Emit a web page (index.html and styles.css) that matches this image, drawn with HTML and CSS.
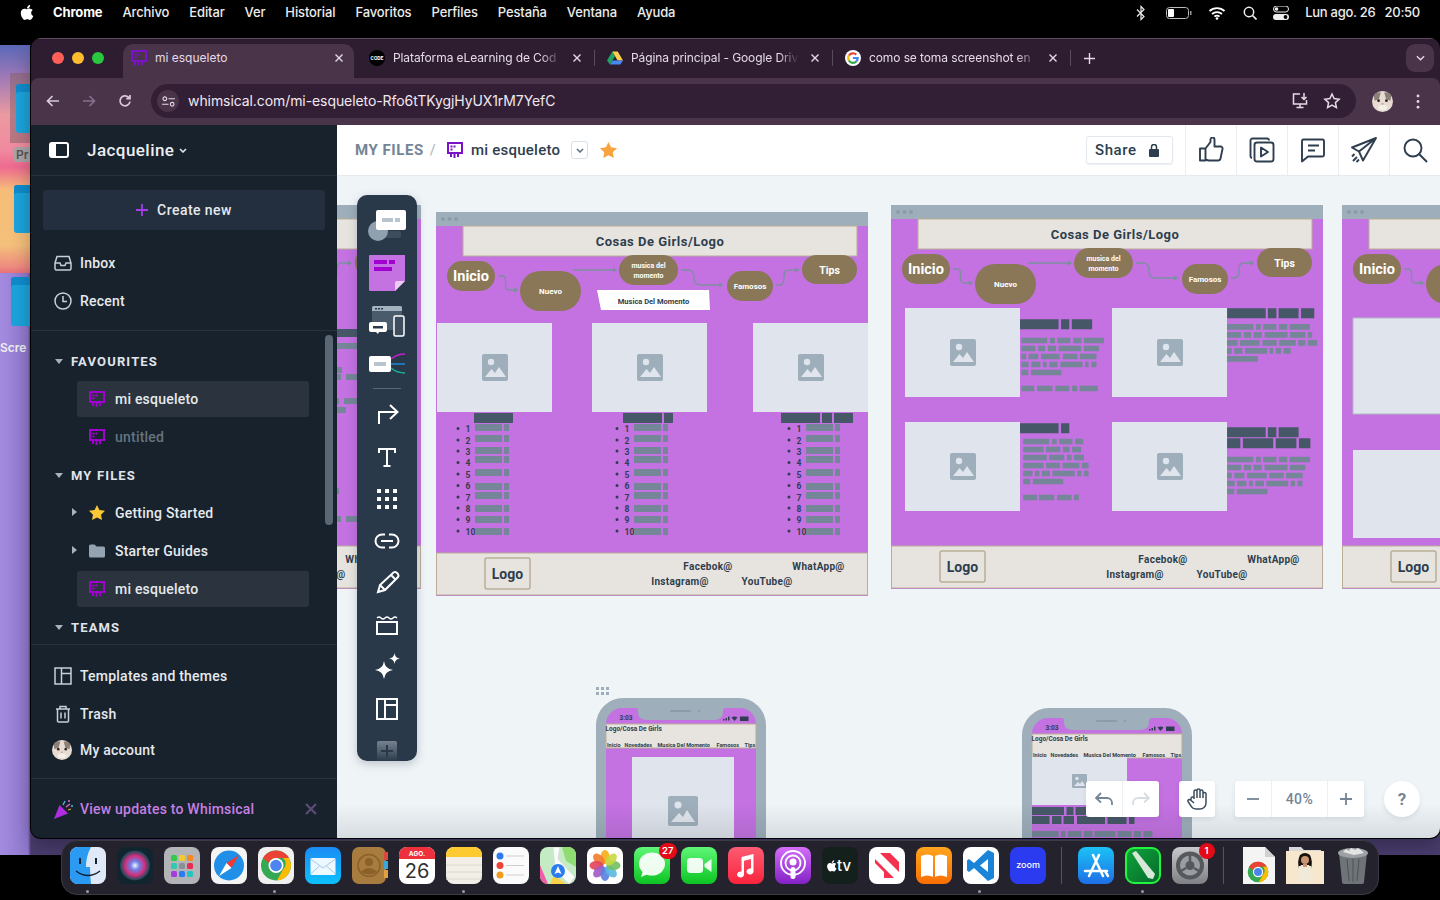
FILE: index.html
```html
<!DOCTYPE html>
<html lang="es">
<head>
<meta charset="utf-8">
<title>mi esqueleto</title>
<link rel="stylesheet" href="styles.css">
</head>
<body>
<svg class="defs" width="0" height="0" aria-hidden="true">
  <defs>
    <symbol id="wb" viewBox="0 0 16 16">
      <path fill="currentColor" d="M0 0h16v12H0zM2 2v8h12V2zM3.500 3.500h2v2h-2zM6.500 3.500h2v2h-2zM3.500 6.500h2v2h-2zM3 12h2v3H3zM6.500 12h2v4h-2zM10 12h2v3h-2z" fill-rule="evenodd"/>
    </symbol>
    <symbol id="chromelogo" viewBox="0 0 32 32">
      <circle cx="16" cy="16" r="15" fill="#34a853"/>
      <path fill="#ea4335" d="M3 8.500A15 15 0 0 1 29 8.500H16a7.500 7.500 0 0 0-7 5z"/>
      <path fill="#fbbc05" d="M29 8.500A15 15 0 0 1 17 31l6-11a7.500 7.500 0 0 0 0-11.500z"/>
      <circle cx="16" cy="16" r="7.500" fill="#fff"/>
      <circle cx="16" cy="16" r="5.800" fill="#4c85f0"/>
    </symbol>
    <symbol id="cat" viewBox="0 0 24 24">
      <circle cx="12" cy="12" r="12" fill="#e8dcd2"/>
      <path fill="#8b8078" d="M2 5c3-4 6-4 8-3L8 9 3 11zM22 5c-3-4-6-4-8-3l2 7 5 2z"/>
      <circle cx="7.500" cy="11" r="1.600" fill="#2e2622"/><circle cx="16.500" cy="11" r="1.600" fill="#2e2622"/>
      <path fill="#c98f8a" d="M10.500 14h3l-1.500 2z"/>
      <ellipse cx="12" cy="19" rx="5" ry="3" fill="#f5efe9"/>
    </symbol>
    <linearGradient id="gMail" x1="0" y1="0" x2="0" y2="1"><stop offset="0" stop-color="#1b8cf5"/><stop offset="1" stop-color="#0cc0fb"/></linearGradient>
    <linearGradient id="gMusic" x1="0" y1="0" x2="0" y2="1"><stop offset="0" stop-color="#fb5c74"/><stop offset="1" stop-color="#fa243c"/></linearGradient>
    <linearGradient id="gPod" x1="0" y1="0" x2="0" y2="1"><stop offset="0" stop-color="#d56efc"/><stop offset="1" stop-color="#8322c4"/></linearGradient>
    <linearGradient id="gBook" x1="0" y1="0" x2="0" y2="1"><stop offset="0" stop-color="#ffa51e"/><stop offset="1" stop-color="#f96e04"/></linearGradient>
    <linearGradient id="gGreen" x1="0" y1="0" x2="0" y2="1"><stop offset="0" stop-color="#5ff777"/><stop offset="1" stop-color="#0cc423"/></linearGradient>
    <linearGradient id="gStore" x1="0" y1="0" x2="0" y2="1"><stop offset="0" stop-color="#1cc2f7"/><stop offset="1" stop-color="#1e6fe6"/></linearGradient>
    <linearGradient id="gSet" x1="0" y1="0" x2="0" y2="1"><stop offset="0" stop-color="#c8c9cc"/><stop offset="1" stop-color="#7e8084"/></linearGradient>
    <linearGradient id="gPlus" x1="0" y1="0" x2="0" y2="1"><stop offset="0" stop-color="#77838f"/><stop offset="1" stop-color="#2b3a4a"/></linearGradient>
    <linearGradient id="gPencil" x1="0" y1="0" x2="1" y2="1"><stop offset="0" stop-color="#0fa53c"/><stop offset="1" stop-color="#05692a"/></linearGradient>
    <radialGradient id="gSiri"><stop offset="0" stop-color="#f4f4ff"/><stop offset=".3" stop-color="#6f7fe6"/><stop offset=".65" stop-color="#d1307e"/><stop offset="1" stop-color="#0f4a55"/></radialGradient>
  </defs>
</svg>

<header class="menubar">
  <div class="menu-left">
    <svg class="apple" viewBox="0 0 384 512"><path fill="#fff" d="M318.700 268.700c-.2-36.700 16.400-64.400 50-84.800-18.800-26.900-47.200-41.700-84.700-44.600-35.500-2.800-74.300 20.700-88.500 20.700-15 0-49.400-19.700-76.400-19.700C63.300 141.200 4 184.800 4 273.500q0 39.300 14.400 81.200c12.800 36.700 59 126.700 107.200 125.200 25.200-.6 43-17.900 75.800-17.900 31.800 0 48.300 17.900 76.400 17.900 48.600-.7 90.400-82.500 102.600-119.300-65.200-30.700-61.700-90-61.700-91.900zm-56.600-164.200c27.300-32.400 24.800-61.900 24-72.500-24.100 1.400-52 16.400-67.900 34.900-17.500 19.800-27.800 44.300-25.600 71.900 26.100 2 49.900-11.400 69.500-34.300z"/></svg>
    <strong class="menu-app">Chrome</strong>
    <span>Archivo</span><span>Editar</span><span>Ver</span><span>Historial</span><span>Favoritos</span><span>Perfiles</span><span>Pestaña</span><span>Ventana</span><span>Ayuda</span>
  </div>
  <div class="menu-right">
    <svg class="st st-bt" viewBox="0 0 10 16"><path fill="none" stroke="#eee" stroke-width="1.200" d="M1 4.500l7 7L5 14.500v-13l3 3-7 7"/></svg>
    <svg class="st st-bat" viewBox="0 0 26 12"><rect x=".5" y=".5" width="22" height="11" rx="3" fill="none" stroke="#bbb"/><rect x="2" y="2" width="6" height="8" rx="1" fill="#fff"/><path fill="#999" d="M24 4h1.500v4H24z"/></svg>
    <svg class="st st-wifi" viewBox="0 0 18 14"><path fill="none" stroke="#fff" stroke-width="1.800" d="M1.500 5a11 11 0 0 1 15 0M4 8a7.500 7.500 0 0 1 10 0M6.500 10.700a3.500 3.500 0 0 1 5 0"/><circle cx="9" cy="12.500" r="1.300" fill="#fff"/></svg>
    <svg class="st st-search" viewBox="0 0 14 14"><circle cx="6" cy="6" r="4.700" fill="none" stroke="#eee" stroke-width="1.500"/><path stroke="#eee" stroke-width="1.700" d="M9.500 9.500l4 4"/></svg>
    <svg class="st st-ctrl" viewBox="0 0 16 14"><rect x=".5" y="0" width="15" height="6" rx="3" fill="none" stroke="#eee"/><circle cx="3.500" cy="3" r="1.800" fill="#eee"/><rect y="8" width="16" height="6" rx="3" fill="#eee"/><circle cx="12.500" cy="11" r="1.900" fill="#000"/></svg>
    <span class="clock-date">Lun ago. 26</span><span class="clock-time">20:50</span>
  </div>
</header>

<div class="desktop">
  <div class="wall-top"></div>
  <div class="wall-folder wf1"><i></i></div>
  <div class="wall-label wl1">Pr</div>
  <div class="wall-folder wf2"><i></i></div>
  <div class="wall-folder wf3"><i></i></div>
  <div class="wall-label wl2">Scre</div>
</div>

<main class="window">
  <div class="tabstrip">
    <div class="lights"><i class="l-r"></i><i class="l-y"></i><i class="l-g"></i></div>
    <div class="tab active">
      <svg class="favicon wbfav"><use href="#wb"/></svg>
      <span class="tab-title">mi esqueleto</span>
      <svg class="tabx" viewBox="0 0 8 8"><path d="M.5.500l7 7M7.500.500l-7 7"/></svg>
    </div>
    <div class="tab">
      <svg class="favicon" viewBox="0 0 16 16"><circle cx="8" cy="8" r="8" fill="#000"/><text class="fav-code" x="8" y="10" text-anchor="middle">CODE</text></svg>
      <span class="tab-title fade">Plataforma eLearning de Cod</span>
      <svg class="tabx" viewBox="0 0 8 8"><path d="M.5.500l7 7M7.500.500l-7 7"/></svg>
    </div>
    <div class="tab">
      <svg class="favicon" viewBox="0 0 16 16"><path fill="#1fa463" d="M0 10.500L5.300 1.500l2.700 4.700L3 14.500z"/><path fill="#ffd04b" d="M5.300 1.500h5.400l5.300 9h-5.400z"/><path fill="#4688f4" d="M16 10.500l-2.700 4H3l2.600-4z"/></svg>
      <span class="tab-title fade">Página principal - Google Driv</span>
      <svg class="tabx" viewBox="0 0 8 8"><path d="M.5.500l7 7M7.500.500l-7 7"/></svg>
    </div>
    <div class="tab">
      <svg class="favicon" viewBox="0 0 16 16"><circle cx="8" cy="8" r="8" fill="#fff"/><path fill="none" stroke="#ea4335" stroke-width="2.200" d="M3.900 5.500A4.800 4.800 0 0 1 11.300 4.600"/><path fill="none" stroke="#fbbc05" stroke-width="2.200" d="M3.900 10.500a4.800 4.800 0 0 1 0-5"/><path fill="none" stroke="#34a853" stroke-width="2.200" d="M11.500 11.300a4.800 4.800 0 0 1-7.600-.8"/><path fill="none" stroke="#4285f4" stroke-width="2.200" d="M8 8h4.700a4.800 4.800 0 0 1-1.200 3.300"/></svg>
      <span class="tab-title fade">como se toma screenshot en</span>
      <svg class="tabx" viewBox="0 0 8 8"><path d="M.5.500l7 7M7.500.500l-7 7"/></svg>
    </div>
    <svg class="newtab" viewBox="0 0 12 12"><path d="M6 0v12M0 6h12"/></svg>
    <div class="tabmenu"><svg viewBox="0 0 10 6"><path d="M1 1l4 4 4-4"/></svg></div>
  </div>

  <div class="toolbar">
    <svg class="nav-ic" viewBox="0 0 14 14"><path d="M13 7H1.500M6.500 2l-5 5 5 5"/></svg>
    <svg class="nav-ic dim" viewBox="0 0 14 14"><path d="M1 7h11.500M7.500 2l5 5-5 5"/></svg>
    <svg class="nav-ic" viewBox="0 0 14 14"><path d="M12 7.500A5 5 0 1 1 10.500 3.200L12 4.500M12 1v3.700H8.300"/></svg>
    <div class="omnibox">
      <span class="site-ic"><svg viewBox="0 0 14 12"><circle cx="3" cy="3" r="2"/><path d="M7 3h7M0 9h7"/><circle cx="11" cy="9" r="2"/></svg></span>
      <span class="url">whimsical.com/mi-esqueleto-Rfo6tTKygjHyUX1rM7YefC</span>
      <svg class="omni-r" viewBox="0 0 18 18"><path d="M9 2H2.500v10h13V8M5.500 15.500h7M9 12v3.500M13 1v6M10.500 5L13 7.500 15.500 5"/></svg>
      <svg class="omni-r" viewBox="0 0 18 18"><path d="M9 2l2.100 4.600 5 .6-3.700 3.400 1 5L9 13.100l-4.400 2.500 1-5L1.900 7.200l5-.6z"/></svg>
    </div>
    <svg class="chrome-avatar"><use href="#cat"/></svg>
    <svg class="chrome-dots" viewBox="0 0 4 16"><circle cx="2" cy="2" r="1.500"/><circle cx="2" cy="8" r="1.500"/><circle cx="2" cy="14" r="1.500"/></svg>
  </div>

  <div class="app">
    <aside class="sidebar">
      <div class="side-head">
        <svg class="toggle" viewBox="0 0 20 16"><path fill="#fff" fill-rule="evenodd" d="M3 0h14a3 3 0 0 1 3 3v10a3 3 0 0 1-3 3H3a3 3 0 0 1-3-3V3a3 3 0 0 1 3-3zM7 2v12h10a1 1 0 0 0 1-1V3a1 1 0 0 0-1-1z"/></svg>
        <span class="workspace">Jacqueline</span>
        <svg class="ws-caret" viewBox="0 0 8 5"><path d="M1 1l3 3 3-3"/></svg>
      </div>
      <div class="create"><svg viewBox="0 0 12 12"><path d="M6 0v12M0 6h12"/></svg>Create new</div>
      <nav class="nav-top">
        <div class="nav-row"><svg viewBox="0 0 18 16"><path d="M1 8l2-6.500h12L17 8v5.500a1.500 1.500 0 0 1-1.500 1.500h-13A1.500 1.500 0 0 1 1 13.500zM1 8h5l1 2.500h4L12 8h5"/></svg>Inbox</div>
        <div class="nav-row"><svg viewBox="0 0 18 18"><circle cx="9" cy="9" r="8"/><path d="M9 4v5.500h4"/></svg>Recent</div>
      </nav>
      <div class="tree">
        <div class="scrollthumb"></div>
        <div class="section"><i class="caret-down"></i>FAVOURITES</div>
        <div class="item sel"><svg class="ic-wb"><use href="#wb"/></svg>mi esqueleto</div>
        <div class="item dimmed"><svg class="ic-wb"><use href="#wb"/></svg>untitled</div>
        <div class="section"><i class="caret-down"></i>MY FILES</div>
        <div class="item"><i class="caret-right"></i><svg class="ic-file" viewBox="0 0 16 16"><path fill="#fcc935" d="M8 0l2.400 5 5.600.8-4 3.900 1 5.400L8 12.500 3 15.100l1-5.400-4-3.900L5.600 5z"/></svg>Getting Started</div>
        <div class="item"><i class="caret-right"></i><svg class="ic-file" viewBox="0 0 16 16"><path fill="#94a3b2" d="M0 3a1.500 1.500 0 0 1 1.500-1.500h4L7.500 3.500h7A1.500 1.500 0 0 1 16 5v8a1.500 1.500 0 0 1-1.500 1.500h-13A1.500 1.500 0 0 1 0 13z"/></svg>Starter Guides</div>
        <div class="item sel"><svg class="ic-wb"><use href="#wb"/></svg>mi esqueleto</div>
        <div class="section"><i class="caret-down"></i>TEAMS</div>
      </div>
      <nav class="nav-bottom">
        <div class="nav-row"><svg viewBox="0 0 18 18"><path d="M1 1h16v16H1zM7.500 1v16M7.500 6.500H17"/></svg>Templates and themes</div>
        <div class="nav-row"><svg viewBox="0 0 18 18"><path d="M2 4h14M6 4V1.500h6V4M3.500 4v12a1.500 1.500 0 0 0 1.500 1h8a1.500 1.500 0 0 0 1.500-1V4M7 7.500v6M11 7.500v6"/></svg>Trash</div>
        <div class="nav-row account"><svg class="acc-av"><use href="#cat"/></svg>My account</div>
      </nav>
      <div class="promo">
        <svg class="confetti" viewBox="0 0 20 20"><path fill="#b12be0" d="M0 20L5.500 6l8.500 8.500z"/><path fill="none" stroke="#5db9e8" stroke-width="1.300" d="M9 6l2-4"/><path fill="none" stroke="#e06ad0" stroke-width="1.300" d="M12 8l4-3"/><path fill="none" stroke="#e0a040" stroke-width="1.300" d="M14 11l3-1"/><circle cx="15" cy="2" r="1" fill="#e06ad0"/><circle cx="18" cy="7" r="1" fill="#5db9e8"/></svg>
        <span class="promo-text">View updates to Whimsical</span>
        <svg class="promo-x" viewBox="0 0 12 12"><path d="M1 1l10 10M11 1L1 11"/></svg>
      </div>
    </aside>

    <section class="workspace-area">
      <div class="topbar">
        <div class="crumbs">
          <span class="crumb-root">MY FILES</span>
          <span class="crumb-sep">/</span>
          <svg class="crumb-wb"><use href="#wb"/></svg>
          <span class="crumb-name">mi esqueleto</span>
          <span class="crumb-drop"><svg viewBox="0 0 8 5"><path d="M1 1l3 3 3-3"/></svg></span>
          <svg class="crumb-star" viewBox="0 0 16 16"><path fill="#f7a440" d="M8 0l2.400 5 5.600.8-4 3.900 1 5.400L8 12.500 3 15.100l1-5.400-4-3.900L5.600 5z"/></svg>
        </div>
        <div class="top-actions">
          <div class="share">Share<svg viewBox="0 0 10 13"><path fill="#2e3e4e" d="M1 5h8a1 1 0 0 1 1 1v6a1 1 0 0 1-1 1H1a1 1 0 0 1-1-1V6a1 1 0 0 1 1-1z"/><path fill="none" stroke="#2e3e4e" stroke-width="1.500" d="M2.500 5V3a2.500 2.500 0 0 1 5 0v2"/></svg></div>
          <div class="act"><svg viewBox="0 0 26 26"><path d="M7.500 11.500H2v12h5.500zM7.500 11.500l5-6.500V2.500a2 2 0 0 1 4 0V9.500h6a2 2 0 0 1 2 2.500l-2 9.500a2.500 2.500 0 0 1-2.500 2H10.500l-3-1"/></svg></div>
          <div class="act"><svg viewBox="0 0 26 26"><path d="M20 3.500V3a2 2 0 0 0-2-1.500H3.500A2 2 0 0 0 1.500 3.500V19a2 2 0 0 0 1.500 2"/><rect x="5.500" y="5.500" width="19" height="19" rx="2.500"/><path d="M12 10.500v9l7-4.500z"/></svg></div>
          <div class="act"><svg viewBox="0 0 26 26"><path d="M3.500 2.500h19a1.500 1.500 0 0 1 1.500 1.500v14a1.500 1.500 0 0 1-1.500 1.500H8L2 24.500V4a1.500 1.500 0 0 1 1.500-1.500zM8 8.500h11M8 13.500h7"/></svg></div>
          <div class="act"><svg viewBox="0 0 26 26"><path d="M25 1L1 10.500l7 4 4 9zM25 1L8 14.500M25 1L12 23.500M2 24l4-4M5.500 25l2.500-2.500M1 19.500l2.500-2.500"/></svg></div>
          <div class="act"><svg viewBox="0 0 26 26"><circle cx="11" cy="11" r="8.500"/><path d="M17 17l8 8"/></svg></div>
        </div>
      </div>

      <div class="canvas">
        <svg class="board" viewBox="337 176 1103 662">
          <defs>
            <g id="shell">
              <rect class="purple" x="891" y="205" width="432" height="384"/>
              <rect class="chromebar" x="891" y="205" width="432" height="14"/>
              <circle class="bardot" cx="898" cy="212" r="2"/><circle class="bardot" cx="904.500" cy="212" r="2"/><circle class="bardot" cx="911" cy="212" r="2"/>
              <rect class="cream" x="918" y="219" width="394" height="30"/>
              <text class="t-title" x="1115" y="238.500">Cosas De Girls/Logo</text>
              <rect class="pill" x="902" y="254" width="48" height="30" rx="15"/>
              <text class="t-inicio" x="926" y="274">Inicio</text>
              <rect class="pill" x="975" y="264" width="61" height="40" rx="20"/>
              <text class="t-nav" x="1005.500" y="287">Nuevo</text>
              <rect class="pill" x="1074" y="248" width="59" height="30" rx="15"/>
              <text class="t-nav2" x="1103.500" y="261">musica del</text>
              <text class="t-nav2" x="1103.500" y="270.500">momento</text>
              <rect class="pill" x="1182" y="264" width="46" height="30" rx="15"/>
              <text class="t-nav" x="1205" y="282">Famosos</text>
              <rect class="pill" x="1257" y="248" width="55" height="29" rx="14.500"/>
              <text class="t-tips" x="1284.500" y="266.500">Tips</text>
              <path class="conn" d="M953.500 269h3q4 0 4 4v6q0 4 4 4h7M1028 263h42M1136 263h7q5 0 6 6v3q1 6 6 6h21M1231 278h3q5 0 5-6v-3q0-6 5-6h8"/>
              <path class="connhead" d="M969 280.500l4.500 2.500-4.500 2.500zM1068 260.500l4.500 2.500-4.500 2.500zM1174 275.500l4.500 2.500-4.500 2.500zM1250 260.500l4.500 2.500-4.500 2.500z"/>
              <rect class="cream" x="891.500" y="546" width="431" height="42"/>
              <rect class="logobox" x="940" y="551" width="45" height="31" rx="2"/>
              <text class="t-logo" x="962.500" y="571.500">Logo</text>
              <text class="t-foot" x="1163" y="562.500">Facebok@</text>
              <text class="t-foot" x="1273.500" y="562.500">WhatApp@</text>
              <text class="t-foot" x="1135" y="577.500">Instagram@</text>
              <text class="t-foot" x="1222" y="577.500">YouTube@</text>
            </g>
            <g id="imgbox">
              <rect class="ph" width="115" height="89"/>
              <g transform="translate(45 31)"><rect class="ph-ic" width="26" height="27" rx="2"/><circle class="ph" cx="9" cy="8" r="3.200"/><path class="ph" d="M3 23l6.500-8 3.500 4 4-6 7 10z"/></g>
            </g>
            <g id="rows">
              <path class="bullets" d="M458 427a1.500 1.500 0 1 1 0 3 1.500 1.500 0 1 1 0-3zM458 438.500a1.500 1.500 0 1 1 0 3 1.500 1.500 0 1 1 0-3zM458 449.500a1.500 1.500 0 1 1 0 3 1.500 1.500 0 1 1 0-3zM458 461a1.500 1.500 0 1 1 0 3 1.500 1.500 0 1 1 0-3zM458 472.500a1.500 1.500 0 1 1 0 3 1.500 1.500 0 1 1 0-3zM458 484a1.500 1.500 0 1 1 0 3 1.500 1.500 0 1 1 0-3zM458 495.500a1.500 1.500 0 1 1 0 3 1.500 1.500 0 1 1 0-3zM458 506.500a1.500 1.500 0 1 1 0 3 1.500 1.500 0 1 1 0-3zM458 518a1.500 1.500 0 1 1 0 3 1.500 1.500 0 1 1 0-3zM458 529.500a1.500 1.500 0 1 1 0 3 1.500 1.500 0 1 1 0-3z"/>
              <text class="t-num" x="465.500" y="432">1</text><text class="t-num" x="465.500" y="443.500">2</text><text class="t-num" x="465.500" y="454.500">3</text><text class="t-num" x="465.500" y="466">4</text><text class="t-num" x="465.500" y="477.500">5</text><text class="t-num" x="465.500" y="489">6</text><text class="t-num" x="465.500" y="500.500">7</text><text class="t-num" x="465.500" y="511.500">8</text><text class="t-num" x="465.500" y="523">9</text><text class="t-num" x="465.500" y="534.500">10</text>
              <path class="bar-g" d="M475 424h27v7h-27zM504 424h5v7h-5zM475 435h27v7h-27zM504 435h5v7h-5zM475 447h27v7h-27zM504 447h5v7h-5zM475 456h27v7h-27zM504 456h5v7h-5zM475 469h27v7h-27zM504 469h5v7h-5zM475 483h27v7h-27zM504 483h5v7h-5zM475 492h27v7h-27zM504 492h5v7h-5zM475 505h27v7h-27zM504 505h5v7h-5zM475 516h27v7h-27zM504 516h5v7h-5zM475 528h27v7h-27zM504 528h5v7h-5z"/>
            </g>
            <g id="phone">
              <rect class="chromebar" x="596" y="698" width="170" height="300" rx="27"/>
              <rect class="purple" x="606" y="708" width="150" height="300" rx="16"/>
              <path class="chromebar" d="M636 708h90q-3 0-3 3v1q0 8-9 8h-67q-9 0-9-8v-1q0-3-2-3z"/>
              <rect class="speaker" x="670" y="710" width="21" height="2" rx="1"/><circle class="speaker" cx="699" cy="711" r="1.200"/>
              <text class="t-status" x="626" y="720">3:03</text>
              <path class="darkfill" d="M723 719h1.500v1.500H723zM725.500 718h1.500v2.500h-1.500zM728 716.500h1.500v4H728zM740 716.500h8.500v4.500H740zM731.500 717.500a5 5 0 0 1 6 0l-3 3.500z"/>
              <rect class="cream" x="606" y="724" width="150" height="24"/>
              <text class="t-pt" x="605.500" y="730.500">Logo/Cosa De Girls</text>
              <text class="t-pn" x="607" y="746.500">Inicio</text><text class="t-pn" x="624.500" y="746.500">Novedades</text><text class="t-pn" x="657.500" y="746.500">Musica Del Momento</text><text class="t-pn" x="716.500" y="746.500">Famosos</text><text class="t-pn" x="744.500" y="746.500">Tips</text>
            </g>
          </defs>

          <!-- frame cut off on the left -->
          <use href="#shell" x="-902"/>
          <path class="bar-d" d="M337 329h20v8h-20z"/>
          <path class="bar-g" d="M337 343h20v6h-20zM337 367h5v6h-5zM337 374h4v6h-4zM346 374h11v6h-11zM337 398h2v6h-2zM344 398h13v6h-13zM337 407h9v6h-9zM337 488h2v6h-2zM337 516h4v6h-4zM346 516h11v6h-11z"/>

          <!-- frame 1 -->
          <use href="#shell" x="-455" y="7"/>
          <path class="tag" d="M597 290h112l1 20H601z"/>
          <text class="t-tag" x="653.500" y="303.500">Musica Del Momento</text>
          <use href="#imgbox" x="437" y="323"/><use href="#imgbox" x="592" y="323"/><use href="#imgbox" x="753" y="323"/>
          <path class="bar-d" d="M474 413h39v10h-39zM623 413h39v10h-39zM664 413h9v10h-9zM781 413h39v10h-39zM822 413h10v10h-10zM834 413h19v10h-19z"/>
          <use href="#rows"/>
          <use href="#rows" x="159"/>
          <use href="#rows" x="331"/>

          <!-- frame 2 -->
          <use href="#shell"/>
          <use href="#imgbox" x="905" y="308"/><use href="#imgbox" x="1112" y="308"/><use href="#imgbox" x="905" y="422"/><use href="#imgbox" x="1112" y="422"/>
          <g transform="translate(880 195) scale(.35714 .33333)">
            <path class="bar-d" d="M392 373h108v30H392zM507 373h23v30h-23zM537 373h57v30h-57zM972 340h108v30H972zM1086 340h24v30h-24zM1116 340h56v30h-56zM1179 340h37v30h-37zM392 685h108v30H392zM507 685h23v30h-23zM972 697h108v30H972zM1086 697h24v30h-24zM1116 697h56v30h-56zM972 730h37v30h-37zM1016 730h85v30h-85zM1108 730h58v30h-58zM1173 730h32v30h-32z"/>
            <path class="bar-g" d="M396 428h72v17h-72zM476 428h14v17h-14zM497 428h36v17h-36zM541 428h23v17h-23zM571 428h56v17h-56zM396 452h39v17h-39zM443 452h19v17h-19zM470 452h23v17h-23zM500 452h63v17h-63zM571 452h42v17h-42zM396 476h13v17h-13zM416 476h27v17h-27zM451 476h52v17h-52zM512 476h41v17h-41zM560 476h46v17h-46zM396 500h20v17h-20zM424 500h25v17h-25zM456 500h11v17h-11zM474 500h23v17h-23zM505 500h62v17h-62zM574 500h10v17h-10zM592 500h14v17h-14zM396 524h19v17h-19zM423 524h85v17h-85zM396 572h36v17h-36zM440 572h43v17h-43zM491 572h39v17h-39zM538 572h14v17h-14zM559 572h51v17h-51z"/>
            <path class="bar-g" d="M972 387h73v17h-73zM1053 387h13v17h-13zM1073 387h37v17h-37zM1117 387h23v17h-23zM1147 387h57v17h-57zM972 411h39v17h-39zM1019 411h20v17h-20zM1046 411h23v17h-23zM1077 411h64v17h-64zM1148 411h43v17h-43zM1198 411h12v17h-12zM972 435h29v17h-29zM1008 435h55v17h-55zM1071 435h40v17h-40zM1118 435h46v17h-46zM1171 435h20v17h-20zM1198 435h26v17h-26zM972 459h13v17h-13zM992 459h23v17h-23zM1022 459h62v17h-62zM1091 459h10v17h-10zM1108 459h15v17h-15zM1130 459h20v17h-20zM972 483h86v17h-86z"/>
            <path class="bar-g" d="M401 731h73v17h-73zM482 731h13v17h-13zM502 731h37v17h-37zM546 731h23v17h-23zM401 755h57v17h-57zM465 755h40v17h-40zM512 755h19v17h-19zM538 755h25v17h-25zM401 779h66v17h-66zM474 779h42v17h-42zM524 779h12v17h-12zM543 779h28v17h-28zM401 803h57v17h-57zM465 803h39v17h-39zM511 803h47v17h-47zM565 803h19v17h-19zM401 827h26v17h-26zM434 827h12v17h-12zM453 827h23v17h-23zM483 827h62v17h-62zM552 827h12v17h-12zM571 827h13v17h-13zM401 851h20v17h-20zM428 851h85v17h-85zM401 899h39v17h-39zM445 899h43v17h-43zM496 899h40v17h-40zM543 899h14v17h-14z"/>
            <path class="bar-g" d="M972 785h73v17h-73zM1053 785h13v17h-13zM1073 785h37v17h-37zM1117 785h23v17h-23zM1147 785h57v17h-57zM972 809h39v17h-39zM1019 809h20v17h-20zM1046 809h23v17h-23zM1077 809h64v17h-64zM1148 809h43v17h-43zM972 833h13v17h-13zM992 833h28v17h-28zM1028 833h55v17h-55zM1090 833h40v17h-40zM1137 833h46v17h-46zM972 857h21v17h-21zM1000 857h26v17h-26zM1033 857h11v17h-11zM1051 857h24v17h-24zM1082 857h61v17h-61zM1150 857h12v17h-12zM1169 857h14v17h-14zM972 881h20v17h-20zM999 881h86v17h-86z"/>
          </g>

          <!-- frame 3 -->
          <use href="#shell" x="451"/>
          <rect class="ph framed" x="1353" y="318" width="90" height="96"/>
          <rect class="ph" x="1353" y="450" width="90" height="88"/>

          <!-- phones -->
          <g class="grip"><rect x="596" y="687" width="3" height="3"/><rect x="601" y="687" width="3" height="3"/><rect x="606" y="687" width="3" height="3"/><rect x="596" y="692" width="3" height="3"/><rect x="601" y="692" width="3" height="3"/><rect x="606" y="692" width="3" height="3"/></g>
          <use href="#phone"/>
          <rect class="ph" x="632" y="757" width="102" height="90"/>
          <g transform="translate(668 796)"><rect class="ph-ic" width="30" height="30" rx="2"/><circle class="ph" cx="10" cy="9" r="3.500"/><path class="ph" d="M3 26l8-9 4 4 4-7 8 12z"/></g>

          <use href="#phone" x="426" y="10"/>
          <rect class="ph" x="1032" y="757" width="95" height="48"/>
          <g transform="translate(1072 774)"><rect class="ph-ic" width="15" height="14" rx="1"/><circle class="ph" cx="5" cy="4.500" r="1.700"/><path class="ph" d="M2 12l4-4 2 2 2-3 3.500 5z"/></g>
          <path class="bar-d" d="M1032 807h32v8h-32zM1066.500 807h7v8h-7zM1075.500 807h30v8h-30zM1032 816h17.500v8H1032zM1052 816h9.500v8H1052zM1063.500 816h10.500v8H1063.500zM1077 816h28v8h-28zM1107.500 816h19v8h-19zM1129 816h5.500v8H1129z"/>
          <path class="bar-g" d="M1032 831h26.500v6H1032zM1061 831h4.500v6H1061zM1068 831h13.500v6h-13.500zM1084 831h8.500v6H1084zM1094.500 831h21v6h-21zM1117.500 831h14v6h-14zM1134 831h7v6h-7zM1143.500 831h9v6h-9z"/>
        </svg>
        <div class="canvas-fade"></div>

        <div class="tools">
          <svg class="tool" viewBox="357 195 60 54" height="54"><rect x="375" y="231" width="26" height="7" rx="2" fill="#3d4d5e"/><circle cx="378" cy="231" r="10" fill="#8fa0af"/><rect x="376" y="210" width="30" height="20" rx="2" fill="#fff"/><rect x="382" y="218" width="11" height="4" fill="#b9c4ce"/><rect x="395" y="218" width="5" height="4" fill="#b9c4ce"/></svg>
          <svg class="tool" viewBox="357 249 60 48" height="48"><path fill="#c471e2" d="M370 255h35v26l-10 10h-25a1 1 0 0 1-1-1v-34a1 1 0 0 1 1-1z"/><path fill="#ecccf6" d="M405 281v0l-10 10v-8a2 2 0 0 1 2-2z"/><path fill="#a100d0" d="M374 260h13v4h-13zM389 260h6v4h-6zM374 267h18v4h-18z"/></svg>
          <svg class="tool" viewBox="357 297 60 48" height="48"><rect x="372" y="306" width="30" height="24" rx="1.500" fill="#4a5b6c"/><path fill="#a4b2bf" d="M372 307.500a1.500 1.500 0 0 1 1.500-1.500h27a1.500 1.500 0 0 1 1.500 1.500v3.500h-30z"/><path fill="#2a3a4a" d="M375 308h2v1.500h-2zM378 308h2v1.500h-2zM381 308h2v1.500h-2z" /><rect x="394" y="316" width="10" height="20" rx="1.500" fill="#3d4d5e" stroke="#fff" stroke-width="1.500"/><path fill="#fff" d="M371 322h14a2 2 0 0 1 2 2v6a2 2 0 0 1-2 2h-6l-1 2-2-2h-5a2 2 0 0 1-2-2v-6a2 2 0 0 1 2-2z"/><rect x="373" y="326" width="10" height="2.500" fill="#2a3a4a"/></svg>
          <svg class="tool" viewBox="357 345 60 36" height="36"><rect x="369" y="356" width="22" height="16" rx="2" fill="#fff"/><rect x="374" y="362" width="12" height="4" fill="#b9c4ce"/><path fill="none" stroke="#c21fc8" stroke-width="1.500" d="M391 359q6-5 14-5"/><path fill="none" stroke="#1c86d8" stroke-width="1.500" d="M391 364h14"/><path fill="none" stroke="#18b29a" stroke-width="1.500" d="M391 368q6 5 14 5"/></svg>
          <div class="tool-sep"></div>
          <svg class="tool line" viewBox="357 392 60 43" height="43"><path d="M379 424v-12h18M390 405l7.500 7-7.500 7"/></svg>
          <svg class="tool line" viewBox="357 435 60 43" height="43"><path d="M379 453v-4h16v4M387 449v17M383.500 466h7"/></svg>
          <svg class="tool" viewBox="357 478 60 42" height="42"><path fill="#fff" d="M377 489h4v4h-4zM385 489h4v4h-4zM393 489h4v4h-4zM377 497h4v4h-4zM385 497h4v4h-4zM393 497h4v4h-4zM377 505h4v4h-4zM385 505h4v4h-4zM393 505h4v4h-4z"/></svg>
          <svg class="tool line" viewBox="357 520 60 42" height="42"><path d="M385 534.500h-3a6.500 6.500 0 0 0 0 13h3M389 534.500h3a6.500 6.500 0 0 1 0 13h-3M381 541h12"/></svg>
          <svg class="tool line" viewBox="357 562 60 42" height="42"><path d="M378 592l2-7 13.500-12.500q1.500-1 3 0l1.500 1.500q1 1.500 0 3L385 590zM380 585l5 5M391 575l5 5"/></svg>
          <svg class="tool line" viewBox="357 604 60 42" height="42"><rect x="377" y="622" width="20" height="12"/><path class="thin" d="M377 618q2-2 4 0t4 0 4 0 4 0 4 0"/></svg>
          <svg class="tool" viewBox="357 646 60 42" height="42"><path fill="#fff" d="M384 661q1 8 9 9-8 1-9 9-1-8-9-9 8-1 9-9zM394.500 653q.5 5 5.500 5.500-5 .5-5.500 5.500-.5-5-5.500-5.500 5-.5 5.500-5.500z"/></svg>
          <svg class="tool line" viewBox="357 688 60 42" height="42"><path d="M377 699h20v20h-20zM385 699v20M385 705h12"/></svg>
          <svg class="tool" viewBox="357 730 60 31" height="31"><path fill="url(#gPlus)" d="M379 741h16a2 2 0 0 1 2 2v18h-20v-18a2 2 0 0 1 2-2z"/><path stroke="#2b3a4a" stroke-width="2" d="M387 745v12M381 751h12"/></svg>
        </div>

        <div class="controls">
          <div class="cgroup">
            <div class="cbtn"><svg viewBox="0 0 18 14"><path d="M6 1L1 6l5 4.500M1 6h11a5 5 0 0 1 5 5v2"/></svg></div>
            <div class="cbtn off"><svg viewBox="0 0 18 14"><path d="M12 1l5 5-5 4.500M17 6H6a5 5 0 0 0-5 5v2"/></svg></div>
          </div>
          <div class="cgroup">
            <div class="cbtn"><svg viewBox="0 0 20 22"><path d="M4 12V10.500a1.500 1.500 0 0 1 3 0M7 11V3.500a1.500 1.500 0 0 1 3 0V10M10 10V2.500a1.500 1.500 0 0 1 3 0V10M13 10V3.500a1.500 1.500 0 0 1 3 0V10M16 10V6a1.500 1.500 0 0 1 3 0v9a6 6 0 0 1-6 6H9a6 6 0 0 1-5-3L1 13.500a1.500 1.500 0 0 1 2.500-1.500L7 15"/></svg></div>
          </div>
          <div class="cgroup">
            <div class="cbtn"><svg viewBox="0 0 12 12"><path d="M0 6h12"/></svg></div>
            <div class="cbtn pct">40%</div>
            <div class="cbtn"><svg viewBox="0 0 12 12"><path d="M6 0v12M0 6h12"/></svg></div>
          </div>
          <div class="help">?</div>
        </div>
      </div>
    </section>
  </div>
</main>

<footer class="dock">
  <svg class="d" viewBox="0 0 36 37"><rect width="36" height="37" rx="8" fill="#dfe9f8"/><path fill="#2b9af3" d="M8 0h13q-5 9-5 20h4q0 9 1 17H8a8 8 0 0 1-8-8V8a8 8 0 0 1 8-8z"/><path d="M10 11v6M26 11v6" stroke="#123" stroke-width="2" fill="none"/><path d="M6 24q12 9 24 0" stroke="#123" stroke-width="1.500" fill="none"/></svg>
  <svg class="d" viewBox="0 0 36 37"><rect width="36" height="37" rx="8" fill="#10252e"/><circle cx="18" cy="18.500" r="15" fill="url(#gSiri)"/></svg>
  <svg class="d" viewBox="0 0 36 37"><rect width="36" height="37" rx="8" fill="#b3b4b8"/><g><rect x="7" y="8" width="6" height="6" rx="1.500" fill="#35c84a"/><rect x="15" y="8" width="6" height="6" rx="1.500" fill="#f4cb2c"/><rect x="23" y="8" width="6" height="6" rx="1.500" fill="#f48a1f"/><rect x="7" y="16" width="6" height="6" rx="1.500" fill="#34c8b0"/><rect x="15" y="16" width="6" height="6" rx="1.500" fill="#8a9096"/><rect x="23" y="16" width="6" height="6" rx="1.500" fill="#ea2a4e"/><rect x="7" y="24" width="6" height="6" rx="1.500" fill="#a63be0"/><rect x="15" y="24" width="6" height="6" rx="1.500" fill="#2a7cf0"/><rect x="23" y="24" width="6" height="6" rx="1.500" fill="#23c7c0"/></g></svg>
  <svg class="d" viewBox="0 0 36 37"><rect width="36" height="37" rx="8" fill="#f4f4f4"/><circle cx="18" cy="18.500" r="15" fill="#1f8fe8"/><path fill="#f03a30" d="M28 8L15.500 16l5 5z"/><path fill="#fff" d="M8 29l7.500-13 5 5z"/></svg>
  <svg class="d" viewBox="0 0 36 37"><rect width="36" height="37" rx="8" fill="#f0f0f0"/><use href="#chromelogo" x="2" y="2.500" width="32" height="32"/></svg>
  <svg class="d" viewBox="0 0 36 37"><rect width="36" height="37" rx="8" fill="url(#gMail)"/><rect x="5.500" y="11" width="25" height="17" rx="1.500" fill="#fff" opacity=".92"/><path fill="none" stroke="#a8c8e8" d="M5.500 12L18 21l12.500-9M5.500 27l9-8M30.500 27l-9-8"/></svg>
  <svg class="d" viewBox="0 0 36 37"><rect width="34" height="37" rx="7" fill="#a87b3e"/><rect x="32" y="5" width="4" height="8" fill="#d94a3e"/><rect x="32" y="14" width="4" height="8" fill="#3aa8d8"/><rect x="32" y="23" width="4" height="8" fill="#e0a040"/><circle cx="17" cy="18.500" r="11" fill="none" stroke="#8a6128" stroke-width="1.500"/><circle cx="17" cy="15" r="4" fill="#8a6128"/><path fill="#8a6128" d="M9 25q8-8 16 0-8 5-16 0z"/></svg>
  <svg class="d" viewBox="0 0 36 37"><rect width="36" height="37" rx="8" fill="#fff"/><path fill="#ee2f3c" d="M8 0h20a8 8 0 0 1 8 8v4H0V8a8 8 0 0 1 8-8z"/><text class="dk-mon" x="18" y="9.300">AGO.</text><text class="dk-day" x="18" y="31">26</text></svg>
  <svg class="d" viewBox="0 0 36 37"><rect width="36" height="37" rx="8" fill="#f2efe6"/><path fill="#fdcb2f" d="M8 0h20a8 8 0 0 1 8 8v2H0V8a8 8 0 0 1 8-8z"/><path stroke="#ddd8cc" d="M0 18h36M0 25h36M0 32h36"/></svg>
  <svg class="d" viewBox="0 0 36 37"><rect width="36" height="37" rx="8" fill="#fbfbfb"/><circle cx="7" cy="9" r="3.500" fill="#2a7cf0"/><circle cx="7" cy="18.500" r="3.500" fill="#f0403a"/><circle cx="7" cy="28" r="3.500" fill="#f49a1f"/><path stroke="#cfcfcf" d="M13 9h18M13 18.500h18M13 28h18"/></svg>
  <svg class="d" viewBox="0 0 36 37"><rect width="36" height="37" rx="8" fill="#c5ebc4"/><path fill="#8fdc72" d="M22 0h6a8 8 0 0 1 8 8v12L26 14z"/><path fill="#f05ca8" d="M0 18l8 19h-.5A8 8 0 0 1 0 29z"/><path fill="#f8d34a" d="M14 28l12 9H10z"/><path fill="#fff" stroke="#dcdcdc" d="M13 0h7l-2 12 17 18-6 7-14-14z" opacity=".9"/><circle cx="18" cy="24" r="7" fill="#2a7cf0"/><path fill="#fff" d="M18 19l3.500 8-3.500-1.500-3.500 1.500z"/></svg>
  <svg class="d" viewBox="0 0 36 37"><rect width="36" height="37" rx="8" fill="#fff"/><g transform="translate(18 18.500)"><ellipse cy="-8.500" rx="4.500" ry="7" fill="#f6b52a"/><ellipse cy="-8.500" rx="4.500" ry="7" fill="#f37b2f" transform="rotate(-45)" opacity=".9"/><ellipse cy="-8.500" rx="4.500" ry="7" fill="#e4425a" transform="rotate(-90)" opacity=".9"/><ellipse cy="-8.500" rx="4.500" ry="7" fill="#a05ac6" transform="rotate(-135)" opacity=".9"/><ellipse cy="-8.500" rx="4.500" ry="7" fill="#5a7ee0" transform="rotate(180)" opacity=".9"/><ellipse cy="-8.500" rx="4.500" ry="7" fill="#5ab8e0" transform="rotate(135)" opacity=".9"/><ellipse cy="-8.500" rx="4.500" ry="7" fill="#70c060" transform="rotate(90)" opacity=".9"/><ellipse cy="-8.500" rx="4.500" ry="7" fill="#c8d840" transform="rotate(45)" opacity=".9"/></g></svg>
  <div class="dwrap"><svg class="d" viewBox="0 0 36 37"><rect width="36" height="37" rx="8" fill="url(#gGreen)"/><ellipse cx="18" cy="17" rx="13" ry="11.500" fill="#fff" opacity=".92"/><path fill="#fff" opacity=".92" d="M9 24l-2 6 7-3z"/></svg><span class="badge">27</span></div>
  <svg class="d" viewBox="0 0 36 37"><rect width="36" height="37" rx="8" fill="url(#gGreen)"/><rect x="6" y="11" width="16" height="15" rx="3.500" fill="#fff" opacity=".92"/><path fill="#fff" opacity=".92" d="M23.500 17l7-5v13l-7-5z"/></svg>
  <svg class="d" viewBox="0 0 36 37"><rect width="36" height="37" rx="8" fill="url(#gMusic)"/><path fill="#fff" d="M13.500 10l12-3v17.500a3.500 3 0 1 1-2.500-2.900V12l-7 1.800v13.700a3.500 3 0 1 1-2.500-2.900z"/></svg>
  <svg class="d" viewBox="0 0 36 37"><rect width="36" height="37" rx="8" fill="url(#gPod)"/><g fill="none" stroke="#fff"><circle cx="18" cy="16" r="12" stroke-width="1.800"/><circle cx="18" cy="16" r="7.500" stroke-width="1.800"/></g><circle cx="18" cy="15" r="3.500" fill="#fff"/><rect x="15.500" y="20" width="5" height="12" rx="2.500" fill="#fff"/></svg>
  <svg class="d" viewBox="0 0 36 37"><rect width="36" height="37" rx="8" fill="#14201c"/><g transform="translate(5 12.500) scale(.025)"><path fill="#fff" d="M318.700 268.700c-.2-36.700 16.400-64.400 50-84.800-18.800-26.900-47.200-41.700-84.700-44.600-35.500-2.800-74.300 20.700-88.500 20.700-15 0-49.400-19.700-76.400-19.700C63.300 141.200 4 184.800 4 273.500q0 39.300 14.400 81.200c12.800 36.700 59 126.700 107.200 125.200 25.200-.6 43-17.900 75.800-17.900 31.800 0 48.300 17.900 76.400 17.900 48.600-.7 90.400-82.500 102.600-119.300-65.200-30.700-61.700-90-61.700-91.900zm-56.600-164.200c27.300-32.400 24.800-61.900 24-72.500-24.100 1.400-52 16.400-67.900 34.900-17.500 19.800-27.800 44.300-25.600 71.900 26.100 2 49.900-11.400 69.500-34.300z"/></g><text class="dk-tv" x="15" y="24">tv</text></svg>
  <svg class="d" viewBox="0 0 36 37"><rect width="36" height="37" rx="8" fill="#fff"/><path fill="#f4324f" d="M6 6h24v25H6z"/><path fill="#fff" d="M6 6h5l19 19v6h-5L6 12zM6 16l9 9v6H6zM21 6h9v9z"/></svg>
  <svg class="d" viewBox="0 0 36 37"><rect width="36" height="37" rx="8" fill="url(#gBook)"/><path fill="#fff" d="M5 9q7-3 12 0v21q-5-3-12 0zM19 9q5-3 12 0v21q-7-3-12 0z"/></svg>
  <svg class="d" viewBox="0 0 36 37"><rect width="36" height="37" rx="8" fill="#fff"/><path fill="#1a85d8" d="M25 3l6 3v25l-6 3-14-13-5 4-2-1.500v-10L6 12l5 4zM25 12l-8 6.500 8 6.500z" fill-rule="evenodd"/></svg>
  <svg class="d" viewBox="0 0 36 37"><rect width="36" height="37" rx="8" fill="#2b3cf0"/><text class="dk-zoom" x="18" y="21">zoom</text></svg>
  <span class="dock-sep"></span>
  <svg class="d" viewBox="0 0 36 37"><rect width="36" height="37" rx="8" fill="url(#gStore)"/><path fill="none" stroke="#fff" stroke-width="2.500" stroke-linecap="round" d="M11 29l10-21M25 29L15 8M7 24h22M27 24l3 5"/></svg>
  <svg class="d" viewBox="0 0 36 37"><rect x="1" y="1" width="34" height="35" rx="8" fill="url(#gPencil)" stroke="#22f53e" stroke-width="2"/><path fill="#d8e8d8" d="M7 6l4-2 19 23-2 5-5-1z"/></svg>
  <div class="dwrap"><svg class="d" viewBox="0 0 36 37"><rect width="36" height="37" rx="8" fill="url(#gSet)"/><circle cx="18" cy="18.500" r="14" fill="#55585c"/><circle cx="18" cy="18.500" r="10" fill="#9a9da1"/><circle cx="18" cy="18.500" r="4.500" fill="#55585c"/><path stroke="#55585c" stroke-width="2.500" d="M18 8v6M9 24l5-3M27 24l-5-3"/></svg><span class="badge">1</span></div>
  <span class="dock-sep"></span>
  <svg class="d doc" viewBox="0 0 32 37"><path fill="#f4f4f4" d="M0 0h22l10 10v27H0z"/><path fill="#d0d0d0" d="M22 0l10 10H22z"/><use href="#chromelogo" x="4" y="14" width="22" height="22"/></svg>
  <svg class="d pic" viewBox="0 0 38 37"><path fill="#d8d8d8" d="M3 0h12l3 3h17v3H3z"/><rect y="4" width="38" height="33" fill="#f6e7cd"/><path fill="#1a1210" d="M14 8q5-4 10 0 3 6 1 14l-2-4h-8l-2 4q-2-8 1-14z"/><circle cx="19" cy="13" r="4" fill="#c99572"/><path fill="#f1ead8" d="M13 19h12l2 9-3 7h-9l-4-7z"/><path fill="#c99572" d="M17 17h4v3h-4z"/></svg>
  <svg class="d trash" viewBox="0 0 32 37"><path fill="#6f7478" d="M2 6h28l-3 29a2 2 0 0 1-2 2H7a2 2 0 0 1-2-2z"/><ellipse cx="16" cy="6" rx="15" ry="5" fill="#9da1a4"/><path fill="#e4e4e4" d="M6 5l3-3 3 2 2-3 4 2 3-2 4 3 2 2-10 2z"/><path stroke="#4d5256" d="M10 12l2 22M16 12v23M22 12l-2 22"/></svg>
  <i class="ddot dd1"></i><i class="ddot dd2"></i><i class="ddot dd3"></i><i class="ddot dd4"></i><i class="ddot dd5"></i>
</footer>
</body>
</html>
```
FILE: styles.css
```css
* { box-sizing: border-box; }
html, body { margin: 0; height: 100%; }
body { position: relative; width: 1440px; height: 900px; overflow: hidden; background: #000; font-family: "Roboto", "Liberation Sans", sans-serif; }
.defs { position: absolute; }

/* macOS menu bar */
.menubar { height: 45px; background: #000; color: #ececec; display: flex; justify-content: space-between; align-items: flex-start; font: 500 13px/25px "Inter", "Liberation Sans", sans-serif; letter-spacing: -.13px; padding: 0 20px; }
.menu-left { display: flex; align-items: center; gap: 20px; height: 25px; }
.apple { width: 14px; height: 17px; margin-right: -1px; }
.menu-app { font-weight: 700; color: #fff; }
.menu-right { display: flex; align-items: center; height: 25px; letter-spacing: -.26px; }
.st { display: block; }
.st-bt { width: 10px; height: 16px; margin-right: 20px; }
.st-bat { width: 26px; height: 12px; margin-right: 16px; }
.st-wifi { width: 18px; height: 14px; margin-right: 17px; }
.st-search { width: 14px; height: 14px; margin-right: 16px; }
.st-ctrl { width: 16px; height: 14px; margin-right: 16px; }
.clock-date { margin-right: 9px; }

/* desktop */
.desktop { position: absolute; left: 0; top: 45px; width: 1440px; height: 810px; background: linear-gradient(90deg, #a38ce0, #8f78cd 28px, #4a3d70 31px); }
.wall-top { position: absolute; left: 0; top: 0; width: 31px; height: 228px; background: linear-gradient(180deg, #5a68b8 0, #9a78b8 30px, #eb9aa0 70px, #f08aa0 105px, #ee6a90 122px, #f5bd78 145px, #f4c07a 200px, #ee8a80 222px, #e8707a 228px); }
.wall-folder { position: absolute; width: 21px; background: rgba(140, 100, 110, .55); }
.wall-folder i { position: absolute; left: 6px; right: 0; border-radius: 3px 0 0 3px; background: #1ca3dc; box-shadow: inset 0 8px 0 #0f8ccc; }
.wf1 { left: 10px; top: 28px; height: 70px; } .wf1 i { top: 11px; bottom: 10px; }
.wf2 { left: 14px; top: 140px; width: 17px; height: 48px; background: none; } .wf2 i { left: 0; top: 0; bottom: 0; }
.wf3 { left: 11px; top: 232px; width: 20px; height: 49px; background: none; } .wf3 i { left: 0; top: 0; bottom: 0; }
.wall-label { position: absolute; color: #eee; font: 600 12px/15px "Inter", sans-serif; white-space: nowrap; overflow: hidden; }
.wl1 { left: 14px; top: 102px; width: 17px; background: #a9a5a8; color: #555; border-radius: 3px 0 0 3px; padding-left: 2px; }
.wl2 { left: 0; top: 295px; width: 31px; }

/* chrome window */
.window { position: absolute; left: 31px; top: 38px; width: 1409px; height: 800px; border-radius: 10px; overflow: hidden; display: flex; flex-direction: column; background: #2e1c30; box-shadow: 0 0 0 1px #000, 0 8px 20px rgba(0,0,0,.3); }
.tabstrip { height: 40px; display: flex; align-items: flex-end; padding-left: 92px; position: relative; color: #e6dae6; font: 400 12px/16px "Inter", sans-serif; border-top: 1px solid #5b4a5c; }
.lights { position: absolute; left: 21px; top: 13px; display: flex; gap: 8px; }
.lights i { width: 12px; height: 12px; border-radius: 50%; }
.l-r { background: #ff5f57; } .l-y { background: #febc2e; } .l-g { background: #28c840; }
.tab { width: 238px; height: 34px; display: flex; align-items: center; padding: 0 14px 6px 8px; position: relative; gap: 8px; }
.tab::after { content: ""; position: absolute; right: 4px; top: 6px; width: 1px; height: 16px; background: #5b4a5c; }
.tab.active { width: 231px; margin-right: 7px; background: #4a344a; border-radius: 10px 10px 0 0; padding-right: 7px; }
.tab.active::after { display: none; }
.favicon { width: 16px; height: 16px; flex: none; }
.wbfav { color: #7a12c8; }
.fav-code { font: 700 5px "Roboto", sans-serif; fill: #fff; }
.tab-title { flex: 1; min-width: 0; white-space: nowrap; overflow: hidden; }
.fade { letter-spacing: -.1px; -webkit-mask-image: linear-gradient(90deg, #000 88%, transparent); mask-image: linear-gradient(90deg, #000 88%, transparent); }
.tabx { width: 8px; height: 8px; margin: 0 4px; flex: none; fill: none; stroke: #e6dae6; stroke-width: 1.400; }
.newtab { width: 11px; height: 11px; margin: 0 0 14.500px 9px; fill: none; stroke: #e6dae6; stroke-width: 1.500; }
.tabmenu { position: absolute; right: 6px; top: 5px; width: 28px; height: 28px; background: #4a344a; border-radius: 9px; display: flex; align-items: center; justify-content: center; }
.tabmenu svg { width: 9px; height: 6px; fill: none; stroke: #e6dae6; stroke-width: 1.500; }

.toolbar { height: 47px; background: #4a344a; display: flex; align-items: center; padding: 0 0 1px 15px; border-radius: 8px 8px 0 0; }
.nav-ic { width: 14px; height: 14px; margin-right: 22px; fill: none; stroke: #d8c8d8; stroke-width: 1.700; flex: none; }
.nav-ic.dim { stroke: #83708a; }
.omnibox { width: 1205px; height: 34px; margin-left: -3px; border-radius: 17px; background: #321f35; display: flex; align-items: center; padding-left: 6px; color: #f0e8f0; }
.site-ic { width: 22px; height: 22px; border-radius: 50%; background: #4a344a; display: flex; align-items: center; justify-content: center; margin-right: 9px; }
.site-ic svg { width: 13px; height: 11px; fill: none; stroke: #e6dae6; stroke-width: 1.200; }
.url { flex: 1; font: 400 14px/20px "Inter", sans-serif; letter-spacing: -.08px; }
.omni-r { width: 18px; height: 18px; margin-right: 14px; fill: none; stroke: #e6dae6; stroke-width: 1.500; }
.omni-r:last-of-type { margin-right: 15px; }
.chrome-avatar { width: 21px; height: 21px; margin-left: 16px; flex: none; }
.chrome-dots { width: 4px; height: 15px; margin-left: 23px; fill: #e6dae6; flex: none; }

.app { flex: 1; display: flex; min-height: 0; }

/* sidebar */
.sidebar { width: 306px; flex: none; background: #17222d; color: #e6e9ed; display: flex; flex-direction: column; font: 500 14px/20px "Roboto", sans-serif; letter-spacing: .22px; }
.side-head { height: 51px; display: flex; align-items: center; padding-left: 18px; border-bottom: 1px solid #26323e; }
.toggle { width: 20px; height: 16px; }
.workspace { margin-left: 18px; font-size: 17px; font-weight: 500; letter-spacing: .45px; color: #eceef1; }
.ws-caret { width: 8px; height: 5px; margin-left: 5px; fill: none; stroke: #e6e9ed; stroke-width: 1.500; }
.create { margin: 14px 12px 14px; height: 40px; background: #232f3e; border-radius: 3px; display: flex; align-items: center; justify-content: center; gap: 9px; color: #e6e9ed; letter-spacing: .45px; }
.create svg { width: 12px; height: 12px; fill: none; stroke: #a33ee8; stroke-width: 1.800; }
.nav-top { padding-bottom: 10px; border-bottom: 1px solid #26323e; }
.nav-row { height: 38px; display: flex; align-items: center; gap: 8px; padding-left: 23px; }
.nav-row svg { width: 18px; height: 18px; fill: none; stroke: #c6d0da; stroke-width: 1.500; flex: none; }
.tree { height: 314px; padding-top: 11px; overflow: hidden; position: relative; border-bottom: 1px solid #26323e; display: flex; flex-direction: column; }
.scrollthumb { position: absolute; right: 4px; top: 4px; width: 8px; height: 190px; border-radius: 4px; background: #5a6875; }
.section { height: 38px; flex: none; display: flex; align-items: center; padding: 1px 0 0 24px; font-size: 13px; font-weight: 700; letter-spacing: 1.150px; color: #e0e4e9; }
.caret-down { width: 0; height: 0; margin-right: 8px; border: 4px solid transparent; border-top: 5px solid #a6b2bd; border-bottom: 0; }
.item { position: relative; flex: none; height: 36px; margin: 1px 28px 1px 46px; padding-left: 12px; display: flex; align-items: center; gap: 10px; border-radius: 3px; color: #e6e9ed; }
.item.sel { background: #2b343e; }
.item.dimmed { color: #66747f; }
.ic-wb { width: 16px; height: 16px; color: #a100d0; flex: none; }
.ic-file { width: 16px; height: 16px; flex: none; }
.caret-right { position: absolute; left: -5px; top: 13px; width: 0; height: 0; border: 4px solid transparent; border-left: 5px solid #a6b2bd; border-right: 0; }
.nav-bottom { padding-top: 12px; padding-bottom: 10px; border-bottom: 1px solid #26323e; }
.account { height: 36px; margin-top: -1px; padding-left: 21px; gap: 8px; }
.nav-row .acc-av { width: 20px; height: 20px; stroke: none; }
.promo { flex: 1; display: flex; align-items: center; padding: 0 20px 0 23px; }
.confetti { width: 20px; height: 20px; flex: none; margin-right: 6px; }
.promo-text { flex: 1; color: #c77fe0; }
.promo-x { width: 12px; height: 12px; fill: none; stroke: #5f4c75; stroke-width: 2.200; }

/* workspace */
.workspace-area { flex: 1; min-width: 0; display: flex; flex-direction: column; background: #eff4f7; }
.topbar { height: 51px; flex: none; background: #fff; border-bottom: 1px solid #e5eaee; display: flex; align-items: stretch; justify-content: space-between; padding-left: 18px; font: 500 15px/20px "Roboto", sans-serif; letter-spacing: .25px; color: #2e3e4e; }
.crumbs { display: flex; align-items: center; }
.crumb-root { font-weight: 700; color: #748596; letter-spacing: .55px; }
.crumb-sep { margin: 0 11px 0 6px; color: #b4bfc9; }
.crumb-wb { width: 16px; height: 16px; color: #7a12c8; }
.crumb-name { margin-left: 8px; }
.crumb-drop { width: 17px; height: 18px; margin-left: 11px; border: 1px solid #d8e1e8; border-radius: 3px; display: flex; align-items: center; justify-content: center; }
.crumb-drop svg { width: 8px; height: 5px; fill: none; stroke: #5d6e7f; stroke-width: 1.500; }
.crumb-star { width: 17px; height: 17px; margin-left: 12px; }
.top-actions { display: flex; align-items: stretch; }
.share { align-self: center; width: 87px; height: 28px; margin-right: 12px; padding: 0 13px 0 8px; border: 1px solid #e2e8ed; border-radius: 3px; display: flex; align-items: center; justify-content: space-between; font-weight: 500; letter-spacing: .6px; box-shadow: 0 1px 1px rgba(40,60,80,.08); }
.share svg { width: 10px; height: 13px; }
.act { width: 51px; border-left: 1px solid #eaeef1; display: flex; align-items: center; justify-content: center; }
.act svg { width: 26px; height: 26px; fill: none; stroke: #2e3e4e; stroke-width: 1.900; stroke-linejoin: round; }

/* canvas */
.canvas { position: relative; flex: 1; min-height: 0; overflow: hidden; }
.board { display: block; width: 1103px; height: 662px; }
.canvas-fade { position: absolute; left: 0; right: 0; bottom: 0; height: 34px; background: linear-gradient(180deg, rgba(40,50,60,0), rgba(40,50,60,.12)); pointer-events: none; }
.purple { fill: #c471e2; }
.chromebar { fill: #9eaebb; }
.bardot { fill: #8c9caa; }
.cream { fill: #e7e4df; stroke: #b9ad97; stroke-width: 1; }
.pill { fill: #8a7758; }
.conn { fill: none; stroke: #7c8ea0; stroke-width: 1.300; }
.connhead { fill: #7c8ea0; }
.logobox { fill: #e7e4df; stroke: #b9ad97; stroke-width: 1.500; }
.ph { fill: #e0e5ed; }
.framed { stroke: #aeb9c4; stroke-width: 1; }
.ph-ic { fill: #9eaebb; }
.bar-d { fill: #465767; }
.bar-g { fill: #748698; }
.bullets { fill: #2e3e4e; }
.tag { fill: #fff; }
.speaker { fill: #8c9caa; }
.darkfill { fill: #2e3e4e; }
.grip { fill: #9eaebb; }
.board text { font-family: "Roboto", sans-serif; font-weight: 700; text-anchor: middle; }
.t-title { font-size: 13px; fill: #2e3e4e; letter-spacing: .5px; }
.t-inicio { font-size: 14.500px; fill: #fff; }
.t-nav { font-size: 8px; fill: #fff; }
.t-nav2 { font-size: 7px; fill: #fff; }
.t-tips { font-size: 10.500px; fill: #fff; }
.t-logo { font-size: 14px; fill: #2e3e4e; }
.t-foot { font-size: 10px; fill: #2e3e4e; letter-spacing: .3px; }
.t-tag { font-size: 7.500px; fill: #2e3e4e; }
.t-num { font-size: 8.500px; fill: #2e3e4e; }
.board .t-num { text-anchor: start; }
.t-status { font-size: 6.500px; fill: #2e3e4e; }
.board .t-pt { font-size: 6.500px; fill: #2e3e4e; text-anchor: start; }
.board .t-pn { font-size: 5.500px; fill: #2e3e4e; text-anchor: start; }

/* tool rail */
.tools { position: absolute; left: 20px; top: 19px; width: 60px; height: 566px; background: #29394a; border-radius: 10px; box-shadow: 0 3px 10px rgba(40,55,70,.25); overflow: hidden; }
.tool { display: block; width: 60px; }
.tool.line { fill: none; stroke: #fff; stroke-width: 2; }
.tool .thin { stroke-width: 1.300; }
.tool-sep { width: 28px; height: 1px; margin: 7px auto 3px; background: #55657a; }

/* bottom-right controls */
.controls { position: absolute; left: 749px; top: 605px; display: flex; gap: 20px; align-items: center; }
.cgroup { display: flex; height: 36px; background: #fff; border-radius: 3px; box-shadow: 0 2px 5px rgba(40,55,70,.1); }
.cbtn { width: 36px; display: flex; align-items: center; justify-content: center; color: #748596; font: 500 14px "Roboto", sans-serif; letter-spacing: .5px; }
.cbtn + .cbtn { width: 37px; border-left: 1px solid #edf0f2; }
.cbtn svg { width: 18px; height: 14px; fill: none; stroke: #748596; stroke-width: 1.800; }
.cgroup:nth-child(2) .cbtn svg { width: 20px; height: 22px; stroke: #3d4d5e; stroke-width: 1.500; }
.cgroup:nth-child(3) .cbtn svg { width: 12px; height: 12px; }
.cbtn.off svg { stroke: #d5dde3; }
.cbtn + .cbtn.pct { width: 56px; }
.help { width: 36px; height: 36px; background: #fff; border-radius: 50%; display: flex; align-items: center; justify-content: center; color: #748596; font: 700 17px "Roboto", sans-serif; box-shadow: 0 2px 5px rgba(40,55,70,.1); }

/* dock */
.dock { position: absolute; left: 61px; top: 840px; width: 1318px; height: 55px; padding: 6px 0 0 7.500px; background: #24222c; border: 1px solid #3b3a45; border-radius: 16px; display: flex; align-items: flex-start; gap: 11px; }
.d { width: 36px; height: 37px; flex: none; display: block; }
.dwrap { position: relative; width: 36px; height: 37px; flex: none; }
.badge { position: absolute; right: -7px; top: -4px; min-width: 16px; height: 16px; padding: 0 3px; border-radius: 8px; background: #e30b17; color: #fff; font: 600 9.500px/16px "Inter", sans-serif; text-align: center; }
.dock-sep { width: 1px; height: 37px; margin: 0 4.500px; background: #55545e; flex: none; }
.doc { width: 32px; margin-left: 3px; }
.pic { width: 38px; }
.trash { width: 32px; margin-left: 2px; }
.dk-mon { font: 700 6.500px "Inter", sans-serif; fill: #fff; text-anchor: middle; }
.dk-day { font: 400 20px "Inter", sans-serif; fill: #333; text-anchor: middle; }
.dk-tv { font: 500 15px "Inter", sans-serif; fill: #fff; }
.dk-zoom { font: 500 9px "Inter", sans-serif; fill: #fff; text-anchor: middle; }
.ddot { position: absolute; top: 49px; width: 3px; height: 3px; border-radius: 50%; background: #9a9aa2; }
.dd1 { left: 23.500px; } .dd2 { left: 211px; } .dd3 { left: 399.500px; } .dd4 { left: 916px; } .dd5 { left: 1079px; }
```
